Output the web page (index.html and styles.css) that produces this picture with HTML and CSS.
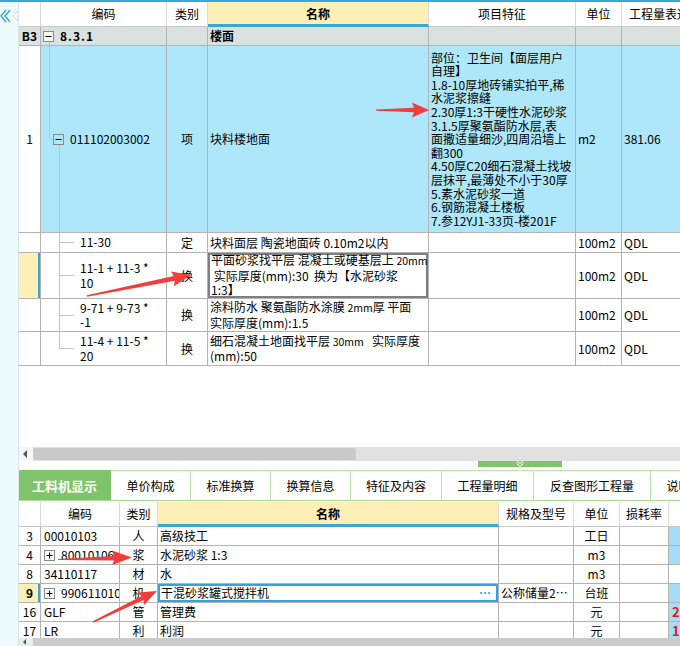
FILE: index.html
```html
<!DOCTYPE html>
<html lang="zh-CN">
<head>
<meta charset="utf-8">
<title>工料机显示</title>
<link rel="stylesheet" href="styles.css">
</head>
<body>
<div class="app">
  <div class="topbar"></div>
  <div class="main">
    <aside class="sidebar">
      <svg class="collapse" width="18" height="20" viewBox="0 0 18 20">
        <polyline points="6,2 1,8 6,14" fill="none" stroke="#2a9fd6" stroke-width="1.3"/>
        <polyline points="10,2 5,8 10,14" fill="none" stroke="#2a9fd6" stroke-width="1.3"/>
        <polygon points="18,3 13,8 18,13" fill="#fff" stroke="#cfd8da" stroke-width="1"/>
      </svg>
    </aside>
    <div class="content">
      <div class="grid top">
        <div class="row thead">
          <div class="c"></div>
          <div class="c">编码</div>
          <div class="c">类别</div>
          <div class="c name-h">名称</div>
          <div class="c">项目特征</div>
          <div class="c">单位</div>
          <div class="c expr-h">工程量表达式</div>
        </div>
        <div class="row r-grp">
          <div class="c ctr">B3</div>
          <div class="c code">
            <span class="tree-grp"><svg class="box" width="11" height="11" viewBox="0 0 11 11"><rect x="0.5" y="0.5" width="10" height="10" fill="#f4f4f4" stroke="#8a8a8a"/><path d="M2.5 5.5H8.5" stroke="#000"/></svg></span>
            <span class="spaced">8.3.1</span>
          </div>
          <div class="c"></div>
          <div class="c">楼面</div>
          <div class="c"></div>
          <div class="c"></div>
          <div class="c"></div>
        </div>
        <div class="row r-main">
          <div class="c num ctr">1</div>
          <div class="c code">
            <span class="tree-root"><svg class="box" width="11" height="11" viewBox="0 0 11 11"><rect x="0.5" y="0.5" width="10" height="10" fill="none" stroke="#8a8a8a"/><path d="M2.5 5.5H8.5" stroke="#000"/></svg></span>
            <span>011102003002</span>
          </div>
          <div class="c ctr">项</div>
          <div class="c">块料楼地面</div>
          <div class="c feat"><div class="lines">部位：卫生间【面层用户<br>自理】<br>1.8-10厚地砖铺实拍平,稀<br>水泥浆擦缝<br>2.30厚1:3干硬性水泥砂浆<br>3.1.5厚聚氨酯防水层,表<br>面撒适量细沙,四周沿墙上<br>翻300<br>4.50厚C20细石混凝土找坡<br>层抹平,最薄处不小于30厚<br>5.素水泥砂浆一道<br>6.钢筋混凝土楼板<br>7.参12YJ1-33页-楼201F</div></div>
          <div class="c">m2</div>
          <div class="c">381.06</div>
        </div>
        <div class="row r-a">
          <div class="c num"></div>
          <div class="c code"><span class="tree-child"></span><div class="lines">11-30</div></div>
          <div class="c ctr">定</div>
          <div class="c">块料面层 陶瓷地面砖 0.10m2以内</div>
          <div class="c"></div>
          <div class="c">100m2</div>
          <div class="c">QDL</div>
        </div>
        <div class="row r-b">
          <div class="c num sel"></div>
          <div class="c code"><span class="tree-child"></span><div class="lines">11-1 + 11-3 *<br>10</div></div>
          <div class="c ctr">换</div>
          <div class="c edit"><div class="lines">平面砂浆找平层 混凝土或硬基层上 <span class="sm">20mm</span><br>&nbsp;实际厚度(mm):30&nbsp;&nbsp;换为【水泥砂浆<br>1:3】</div></div>
          <div class="c"></div>
          <div class="c">100m2</div>
          <div class="c">QDL</div>
        </div>
        <div class="row r-c">
          <div class="c num"></div>
          <div class="c code"><span class="tree-child"></span><div class="lines">9-71 + 9-73 *<br>-1</div></div>
          <div class="c ctr">换</div>
          <div class="c"><div class="lines">涂料防水 聚氨酯防水涂膜 <span class="sm">2mm</span>厚 平面<br>实际厚度(mm):1.5</div></div>
          <div class="c"></div>
          <div class="c">100m2</div>
          <div class="c">QDL</div>
        </div>
        <div class="row r-d">
          <div class="c num"></div>
          <div class="c code"><span class="tree-child last"></span><div class="lines">11-4 + 11-5 *<br>20</div></div>
          <div class="c ctr">换</div>
          <div class="c"><div class="lines">细石混凝土地面找平层 <span class="sm">30mm</span>&nbsp;&nbsp;&nbsp;实际厚度<br>(mm):50</div></div>
          <div class="c"></div>
          <div class="c">100m2</div>
          <div class="c">QDL</div>
        </div>
      </div>

      <div class="blank"></div>

      <div class="hscroll">
        <div class="sbtn"><svg width="14" height="14" viewBox="0 0 14 14"><polygon points="8,3 4,7 8,11" fill="#555"/></svg></div>
        <div class="thumb"></div>
      </div>

      <div class="splitter">
        <div class="handle"><svg width="10" height="6" viewBox="0 0 10 6"><polyline points="1.5,0 5,2.5 8.5,0" fill="none" stroke="#fff" stroke-width="1"/><polyline points="1.5,2.5 5,5 8.5,2.5" fill="none" stroke="#fff" stroke-width="1"/></svg></div>
      </div>

      <div class="tabs">
        <div class="tab active w92">工料机显示</div>
        <div class="tab w80">单价构成</div>
        <div class="tab w80">标准换算</div>
        <div class="tab w80">换算信息</div>
        <div class="tab w91">特征及内容</div>
        <div class="tab w92">工程量明细</div>
        <div class="tab w117">反查图形工程量</div>
        <div class="tab w80">说明信息</div>
      </div>

      <div class="grid bottom">
        <div class="row bhead">
          <div class="c"></div>
          <div class="c">编码</div>
          <div class="c">类别</div>
          <div class="c name-h">名称</div>
          <div class="c">规格及型号</div>
          <div class="c">单位</div>
          <div class="c">损耗率</div>
          <div class="c"></div>
        </div>
        <div class="row brow">
          <div class="c ctr">3</div>
          <div class="c bcode">00010103</div>
          <div class="c ctr">人</div>
          <div class="c">高级技工</div>
          <div class="c"></div>
          <div class="c ctr">工日</div>
          <div class="c"></div>
          <div class="c xb"></div>
        </div>
        <div class="row brow">
          <div class="c ctr">4</div>
          <div class="c bcode"><svg class="pbox" width="11" height="11" viewBox="0 0 11 11"><rect x="0.5" y="0.5" width="10" height="10" fill="#fff" stroke="#8a8a8a"/><path d="M2.5 5.5H8.5M5.5 2.5V8.5" stroke="#000"/></svg>80010106</div>
          <div class="c ctr">浆</div>
          <div class="c">水泥砂浆 1:3</div>
          <div class="c"></div>
          <div class="c ctr">m3</div>
          <div class="c"></div>
          <div class="c xb"></div>
        </div>
        <div class="row brow">
          <div class="c ctr">8</div>
          <div class="c bcode">34110117</div>
          <div class="c ctr">材</div>
          <div class="c">水</div>
          <div class="c"></div>
          <div class="c ctr">m3</div>
          <div class="c"></div>
          <div class="c"></div>
        </div>
        <div class="row brow">
          <div class="c ctr sel bold">9</div>
          <div class="c bcode"><svg class="pbox" width="11" height="11" viewBox="0 0 11 11"><rect x="0.5" y="0.5" width="10" height="10" fill="#fff" stroke="#8a8a8a"/><path d="M2.5 5.5H8.5M5.5 2.5V8.5" stroke="#000"/></svg>990611010</div>
          <div class="c ctr">机</div>
          <div class="c bsel"><span>干混砂浆罐式搅拌机</span><span class="dots">⋯</span></div>
          <div class="c">公称储量2…</div>
          <div class="c ctr">台班</div>
          <div class="c"></div>
          <div class="c xb"></div>
        </div>
        <div class="row brow">
          <div class="c ctr">16</div>
          <div class="c bcode">GLF</div>
          <div class="c ctr">管</div>
          <div class="c">管理费</div>
          <div class="c"></div>
          <div class="c ctr">元</div>
          <div class="c"></div>
          <div class="c xb red">2</div>
        </div>
        <div class="row brow">
          <div class="c ctr">17</div>
          <div class="c bcode">LR</div>
          <div class="c ctr">利</div>
          <div class="c">利润</div>
          <div class="c"></div>
          <div class="c ctr">元</div>
          <div class="c"></div>
          <div class="c xb red">1</div>
        </div>
      </div>

      <div class="bscroll">
        <div class="bbtn"><svg width="14" height="8" viewBox="0 0 14 8"><polygon points="7,1 4,4 7,7" fill="#555"/></svg></div>
      </div>
    </div>
  </div>

  <svg class="arrows" width="680" height="646" viewBox="0 0 680 646">
    <polygon points="376,109.5 414,107.8 412,102.5 429,110 412,117.5 414,112.2 376,110.7"/>
    <polygon points="86.86,295.31 173.8,275.95 170.9,271.45 191,275 173.9,286.15 174.8,280.85 87.14,296.69"/>
    <polygon points="58,559 114,556 112,550.5 132,557.5 112,565 114,560.5 58,560"/>
    <polygon points="92.69,621.37 141.6,595.93 137.75,592.55 157,591 143.85,605.15 143.6,600.07 93.31,622.63"/>
  </svg>
</div>
</body>
</html>
```

FILE: styles.css
```css
* { box-sizing: border-box; }
html, body { margin: 0; padding: 0; }
body {
  width: 680px;
  height: 646px;
  overflow: hidden;
  background: #fff;
  font-family: "Noto Sans CJK SC", "Noto Sans", sans-serif;
  font-size: 12px;
  color: #000;
}
.app { position: relative; width: 680px; height: 646px; overflow: hidden; }
.topbar { height: 2px; background: #3aa6d8; }
.main { display: flex; height: 644px; }
.sidebar {
  flex: 0 0 19px;
  background: #eefbfd;
  border-right: 1px solid #d6e6ea;
  padding-top: 6px;
}
.collapse { display: block; }
.content {
  flex: 1;
  min-width: 0;
  display: flex;
  flex-direction: column;
  overflow: hidden;
}

/* grids */
.grid { overflow: hidden; flex: none; }
.row { display: grid; }
.top .row { grid-template-columns: 22px 126px 41px 221px 147px 46px 88px; width: 691px; }
.bottom .row { grid-template-columns: 22px 79px 38px 341px 75px 46px 49px 40px; width: 690px; }
.c {
  display: flex;
  align-items: center;
  border-right: 1px solid #b3b3b3;
  border-bottom: 1px solid #b3b3b3;
  padding: 0 2px;
  white-space: nowrap;
  overflow: hidden;
  line-height: 14px;
}
.ctr { justify-content: center; }
.lines { line-height: 14.5px; white-space: nowrap; }
.sm { font-size: 10.5px; }

.thead { height: 25px; }
.thead .c, .bhead .c {
  justify-content: center;
  border-right-color: #dadada;
  border-bottom-color: #c8c8c8;
  background: #fff;
}
.c.name-h {
  background: #feefb6;
  font-weight: bold;
  border-bottom: 3px solid #3aa6d8;
  padding-top: 2px;
}
.c.expr-h { justify-content: flex-start; padding-left: 7px; }

.r-grp { height: 19px; }
.r-grp .c { background: #d9e2de; font-weight: bold; }
.spaced { letter-spacing: 1px; }
.r-main { height: 187px; }
.r-main .c { background: #aee7f9; }
.r-main .c.num { background: #fff; }
.feat .lines { line-height: 13.6px; }
.r-a { height: 20px; }
.r-b { height: 46px; }
.r-c { height: 33px; }
.r-d { height: 34px; }

.c.code { padding: 0; align-items: center; }
.tree-grp {
  flex: 0 0 19px;
  align-self: stretch;
  display: flex;
  align-items: center;
  background: linear-gradient(#c2c2c2, #c2c2c2) 8px 100% / 1px calc(50% - 5px) no-repeat;
}
.tree-grp .box { margin-left: 2px; display: block; }
.tree-root {
  flex: 0 0 29px;
  align-self: stretch;
  display: flex;
  align-items: center;
  background:
    linear-gradient(#c2c2c2, #c2c2c2) 8px 0 / 1px 50% no-repeat,
    linear-gradient(#c2c2c2, #c2c2c2) 8px 50% / 5px 1px no-repeat,
    linear-gradient(#c2c2c2, #c2c2c2) 18px 100% / 1px calc(50% - 5px) no-repeat;
}
.tree-root .box { margin-left: 12px; display: block; }
.tree-child {
  flex: 0 0 39px;
  align-self: stretch;
  background:
    linear-gradient(#c2c2c2, #c2c2c2) 18px 0 / 1px 100% no-repeat,
    linear-gradient(#c2c2c2, #c2c2c2) 18px 50% / 15px 1px no-repeat;
}
.tree-child.last {
  background:
    linear-gradient(#c2c2c2, #c2c2c2) 18px 0 / 1px 50% no-repeat,
    linear-gradient(#c2c2c2, #c2c2c2) 18px 50% / 15px 1px no-repeat;
}
.c.sel { background: #feefb6; box-shadow: inset -2px 0 0 #36a6d8; }
.c.edit { box-shadow: inset 0 0 0 2px #7f7f7f; padding-left: 3px; }

/* empty area + scrollbar */
.blank { height: 81px; flex: none; }
.hscroll {
  height: 14px;
  flex: none;
  display: flex;
  background: #e1e1e1;
}
.sbtn { width: 14px; height: 14px; background: #f6f6f6; }
.sbtn svg { display: block; }
.thumb {
  width: 323px;
  height: 12px;
  margin-top: 1px;
  background: #c9c9c9;
  border-radius: 2px;
}
.splitter { height: 9px; flex: none; }
.handle {
  margin-left: 459px;
  width: 84px;
  height: 6px;
  background: #7fc46b;
  display: flex;
  justify-content: center;
}
.handle svg { display: block; }

/* tabs */
.tabs {
  height: 31px;
  flex: none;
  display: flex;
  border-bottom: 1px solid #abdc96;
  margin-bottom: 1px;
}
.tab {
  flex: none;
  display: flex;
  align-items: center;
  justify-content: center;
  border-top: 1px solid #b9e6a6;
  border-right: 1px solid #b9e6a6;
  white-space: nowrap;
  overflow: hidden;
  font-size: 12px;
}
.tab.active {
  background: #7fc46b;
  border-color: #7fc46b;
  color: #fff;
  font-weight: bold;
  font-size: 13px;
}
.w80 { width: 80px; }
.w91 { width: 91px; }
.w92 { width: 92px; }
.w117 { width: 117px; }

/* bottom grid */
.grid.bottom { height: 136px; }
.bhead { height: 25px; }
.brow { height: 19px; }
.c.bcode { padding-left: 3px; }
.pbox { display: block; margin-right: 6px; flex: none; }
.bold { font-weight: bold; }
.c.bsel {
  box-shadow: inset 0 0 0 2px #33a3d9;
  justify-content: space-between;
  padding-left: 3px;
  padding-right: 7px;
}
.dots { color: #2a9fd6; font-weight: bold; }
.c.xb { background: #a6dcf6; }
.c.red { color: #e8141a; font-weight: bold; font-size: 13px; padding-left: 3px; }

.bscroll { height: 8px; flex: none; background: #cbcbcb; display: flex; }
.bbtn { width: 14px; height: 8px; background: #ececec; }
.bbtn svg { display: block; }

/* annotation arrows */
.arrows {
  position: absolute;
  left: 0;
  top: 0;
  pointer-events: none;
  fill: #f23d3d;
}
```
